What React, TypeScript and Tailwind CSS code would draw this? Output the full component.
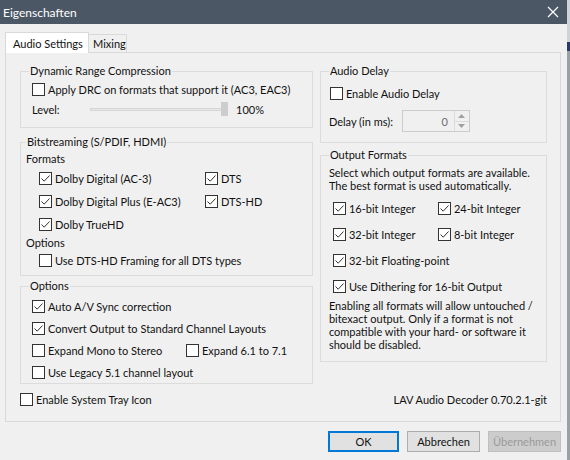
import type { ReactNode } from 'react'

const font = { fontFamily: 'Lato, "Liberation Sans", sans-serif' }

function Check({ checked, label, className = '' }: { checked?: boolean; label: string; className?: string }) {
  return (
    <div className={`flex items-center h-[13px] ${className}`}>
      <span className="w-[13px] h-[13px] shrink-0 border border-[#333333] bg-white flex items-center justify-center">
        {checked && (
          <svg width="11" height="11" viewBox="0 0 11 11">
            <path d="M1.5 5.5 L4.2 8.2 L9.5 2.5" fill="none" stroke="#333333" strokeWidth="1" />
          </svg>
        )}
      </span>
      <span className="ml-[3px]">{label}</span>
    </div>
  )
}

function Group({ title, className = '', children }: { title: string; className?: string; children: ReactNode }) {
  return (
    <fieldset className={`border border-[#dcdcdc] px-[8px] ${className}`}>
      <legend className="px-[1px] leading-[14px]">{title}</legend>
      {children}
    </fieldset>
  )
}

export default function App() {
  return (
    <div
      className="w-[570px] h-[460px] flex bg-[#cfd3d8] text-[11px] leading-[15px] text-[#111111] overflow-hidden whitespace-nowrap"
      style={font}
    >
      <div className="w-[567px] h-full bg-[#f0f0f0] flex flex-col">
        {/* title bar */}
        <div className="h-[24px] bg-[#4c5765] flex items-center justify-between pl-[3px] pr-[8px] text-white">
          <span className="text-[12px]">Eigenschaften</span>
          <svg width="12" height="12" viewBox="0 0 12 12">
            <path d="M1 1 L11 11 M11 1 L1 11" stroke="#ffffff" strokeWidth="1.2" />
          </svg>
        </div>

        <div className="flex flex-col pl-[5px] pr-[6px] pt-[8px]">
          {/* tabs */}
          <div className="flex items-end h-[20px]">
            <div className="relative z-10 -mb-px h-[21px] w-[84px] bg-white border border-b-0 border-[#d9d9d9] flex items-center pl-[7px]">
              Audio Settings
            </div>
            <div className="h-[18px] w-[38px] border border-l-0 border-b-0 border-[#d9d9d9] flex items-center pl-[4px]">
              Mixing
            </div>
          </div>

          {/* tab page */}
          <div className="h-[370px] border border-[#d9d9d9] pl-[14px] pr-[13px] pt-[11px] flex flex-col">
            <div className="flex gap-[7px]">
              {/* left column */}
              <div className="w-[294px] flex flex-col">
                <Group title="Dynamic Range Compression" className="h-[64px]">
                  <Check className="mt-[5px] ml-[3px]" label="Apply DRC on formats that support it (AC3, EAC3)" />
                  <div className="flex items-center mt-[5px] ml-[3px] h-[16px]">
                    <span className="w-[58px]">Level:</span>
                    <div className="relative w-[138px] h-[14px] flex items-center">
                      <div className="w-full h-[3px] bg-[#e7e7e7] border border-[#d6d6d6]" />
                      <div className="absolute right-0 top-0 w-[7px] h-[14px] bg-[#cdcdcd]" />
                    </div>
                    <span className="ml-[8px]">100%</span>
                  </div>
                </Group>

                <Group title="Bitstreaming (S/PDIF, HDMI)" className="mt-[7px] h-[141px] !px-[5px]">
                  <div className="mt-[3px] leading-[14px]">Formats</div>
                  <div className="grid grid-cols-[166px_auto] ml-[13px] mt-[6px] gap-y-[10px]">
                    <Check checked label="Dolby Digital (AC-3)" />
                    <Check checked label="DTS" />
                    <Check checked label="Dolby Digital Plus (E-AC3)" />
                    <Check checked label="DTS-HD" />
                    <Check checked label="Dolby TrueHD" />
                  </div>
                  <div className="mt-[5px] leading-[14px]">Options</div>
                  <Check className="ml-[13px] mt-[4px]" label="Use DTS-HD Framing for all DTS types" />
                </Group>

                <Group title="Options" className="mt-[3px] h-[105px]">
                  <div className="flex flex-col gap-[9px] mt-[7px] ml-[3px]">
                    <Check checked label="Auto A/V Sync correction" />
                    <Check checked label="Convert Output to Standard Channel Layouts" />
                    <div className="flex">
                      <Check className="w-[154px]" label="Expand Mono to Stereo" />
                      <Check label="Expand 6.1 to 7.1" />
                    </div>
                    <Check label="Use Legacy 5.1 channel layout" />
                  </div>
                </Group>
              </div>

              {/* right column */}
              <div className="w-[228px] flex flex-col">
                <Group title="Audio Delay" className="h-[79px]">
                  <Check className="mt-[9px] ml-[1px]" label="Enable Audio Delay" />
                  <div className="flex items-center mt-[10px] h-[22px]">
                    <span className="w-[73px]">Delay (in ms):</span>
                    <div className="w-[68px] h-[22px] border border-[#cccccc] bg-[#f0f0f0] flex items-center">
                      <span className="flex-1 text-right pr-[6px] text-[#6d6d6d]">0</span>
                      <div className="w-[15px] h-full border-l border-[#dcdcdc] flex flex-col">
                        <div className="flex-1 flex items-center justify-center border-b border-[#dcdcdc]">
                          <svg width="7" height="4" viewBox="0 0 7 4"><path d="M0 4 L3.5 0 L7 4 Z" fill="#a0a0a0" /></svg>
                        </div>
                        <div className="flex-1 flex items-center justify-center">
                          <svg width="7" height="4" viewBox="0 0 7 4"><path d="M0 0 L3.5 4 L7 0 Z" fill="#a0a0a0" /></svg>
                        </div>
                      </div>
                    </div>
                  </div>
                </Group>

                <Group title="Output Formats" className="mt-[5px] h-[214px]">
                  <div className="mt-[4px] leading-[13px]">
                    Select which output formats are available.
                    <br />
                    The best format is used automatically.
                  </div>
                  <div className="grid grid-cols-[105px_auto] ml-[4px] mt-[10px] gap-y-[13px]">
                    <Check checked label="16-bit Integer" />
                    <Check checked label="24-bit Integer" />
                    <Check checked label="32-bit Integer" />
                    <Check checked label="8-bit Integer" />
                    <Check checked className="col-span-2" label="32-bit Floating-point" />
                    <Check checked className="col-span-2" label="Use Dithering for 16-bit Output" />
                  </div>
                  <div className="mt-[6px] leading-[13px]">
                    Enabling all formats will allow untouched /<br />
                    bitexact output. Only if a format is not<br />
                    compatible with your hard- or software it<br />
                    should be disabled.
                  </div>
                </Group>
              </div>
            </div>

            <div className="flex items-center justify-between mt-[8px]">
              <Check label="Enable System Tray Icon" />
              <span>LAV Audio Decoder 0.70.2.1-git</span>
            </div>
          </div>

          {/* buttons */}
          <div className="flex justify-end gap-[8px] mt-[9px]">
            <button className="w-[71px] h-[21px] bg-[#e1e1e1] border-2 border-[#0078d7]">OK</button>
            <button className="w-[73px] h-[21px] bg-[#e1e1e1] border border-[#adadad]">Abbrechen</button>
            <button className="w-[73px] h-[21px] bg-[#cccccc] border border-[#bfbfbf] text-[#9a9a9a]">Übernehmen</button>
          </div>
        </div>
      </div>
      <div className="flex-1 flex flex-col">
        <div className="h-[42px] bg-[#cfd3d8]" />
        <div className="h-[9px] bg-[#2a3a6a]" />
        <div className="flex-1 bg-[#9aa0a8]" />
      </div>
    </div>
  )
}
